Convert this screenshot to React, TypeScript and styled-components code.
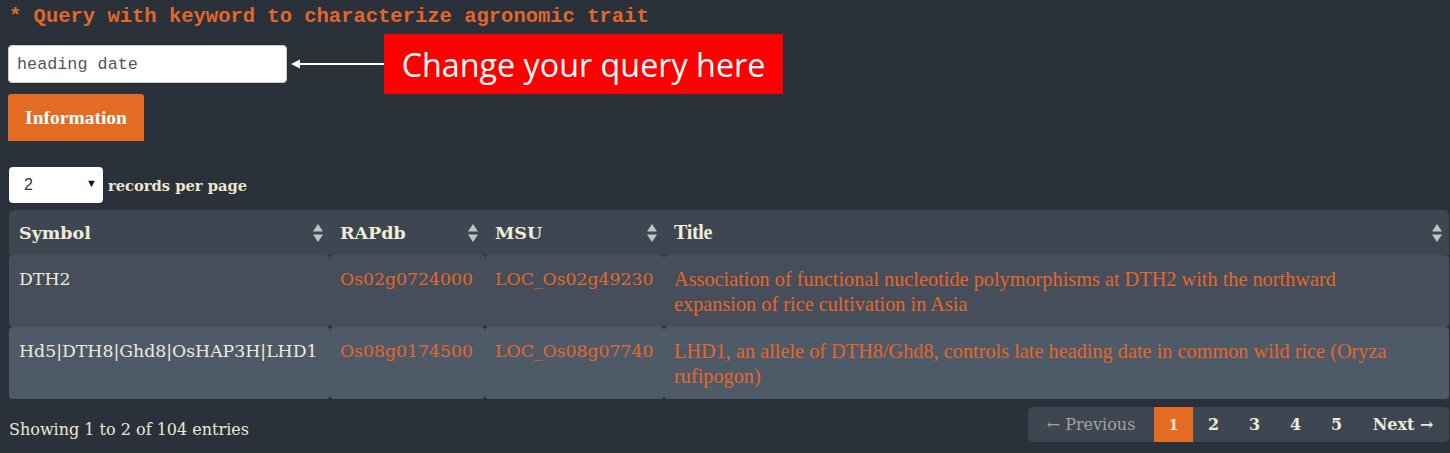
import React from "react";
import styled, { createGlobalStyle } from "styled-components";

const Global = createGlobalStyle`
  html, body { margin: 0; padding: 0; background: #2b313b; }
  body { width: 1450px; height: 453px; overflow: hidden; }
`;

const serif = `"DejaVu Serif", Georgia, serif`;
const narrowSerif = `"Liberation Serif", "Times New Roman", serif`;

const Page = styled.div`
  padding: 5px 1px 0 9px;
  display: flex;
  flex-direction: column;
`;

const Heading = styled.h4`
  margin: 0;
  font-family: "Liberation Mono", monospace;
  font-weight: bold;
  font-size: 20.5px;
  line-height: 24px;
  color: #e2672a;
`;

const QueryRow = styled.div`
  display: flex;
  align-items: center;
  margin-top: 5px;
  height: 60px;
  margin-left: -1px;
`;

const QueryInput = styled.input`
  box-sizing: border-box;
  width: 279px;
  height: 38px;
  border: 1px solid #ccc;
  border-radius: 4px;
  padding: 0 8px;
  font-family: "Liberation Mono", monospace;
  font-size: 16.8px;
  color: #555;
  background: #fff;
  outline: none;
`;

const Arrow = styled.svg`
  display: block;
  margin-left: 4px;
`;

const Callout = styled.div`
  background: #ff0000;
  color: #fff;
  font-family: "Open Sans", sans-serif;
  font-size: 32.3px;
  height: 60px;
  width: 399px;
  display: flex;
  align-items: center;
  justify-content: center;
  box-sizing: border-box;
`;

const InfoButton = styled.button`
  align-self: flex-start;
  margin-left: -1px;
  width: 136px;
  height: 47px;
  border: none;
  border-radius: 3px 3px 0 0;
  background: #e46b24;
  color: #fff;
  font-family: ${narrowSerif};
  font-weight: bold;
  font-size: 19.5px;
  padding: 0;
`;

const LengthRow = styled.div`
  display: flex;
  align-items: center;
  margin-top: 26px;
  gap: 5px;
`;

const Select = styled.div`
  box-sizing: border-box;
  width: 94px;
  height: 36px;
  background: #fff;
  border-radius: 4px;
  display: flex;
  align-items: center;
  justify-content: space-between;
  padding: 0 6px 0 15px;
  font-family: "Liberation Sans", sans-serif;
  font-size: 16px;
  color: #333;
`;

const Caret = styled.span`
  font-size: 11px;
  color: #111;
  margin-top: -4px;
`;

const Label = styled.span`
  font-family: ${serif};
  font-size: 14.7px;
  font-weight: bold;
  color: #ebe6cf;
`;

const Table = styled.table`
  margin-top: 7px;
  width: 1440px;
  border-collapse: separate;
  border-spacing: 0;
  table-layout: fixed;
`;

const Th = styled.th<{ $w?: number }>`
  ${(p) => (p.$w ? `width: ${p.$w}px;` : "")}
  background: #3e4652;
  height: 45px;
  padding: 0 10px;
  text-align: left;
  font-family: ${serif};
  font-size: 17.5px;
  font-weight: bold;
  color: #f1ecd6;
  position: relative;
  &:first-child { border-top-left-radius: 5px; }
  &:last-child { border-top-right-radius: 5px; }
`;

const TitleTh = styled(Th)`
  font-family: ${narrowSerif};
  font-size: 20px;
  letter-spacing: -0.3px;
`;

const SortIcon = styled.svg`
  position: absolute;
  right: 7px;
  top: 13px;
`;

const Tr = styled.tr<{ $alt?: boolean }>`
  td { background: ${(p) => (p.$alt ? "#4f5a68" : "#454e5a")}; }
`;

const Td = styled.td`
  height: 72px;
  padding: 12px 10px 0;
  box-sizing: border-box;
  vertical-align: top;
  border-radius: 4px;
  font-family: ${serif};
  font-size: 17.3px;
  color: #eeeade;
  line-height: 25px;
`;

const LinkTd = styled(Td)`
  color: #e4672b;
`;

const TitleTd = styled(Td)`
  color: #e4672b;
  font-family: ${narrowSerif};
  font-size: 20.3px;
  padding-right: 60px;
`;

const Footer = styled.div`
  display: flex;
  align-items: center;
  justify-content: space-between;
  margin-top: 8px;
`;

const Info = styled.span`
  font-family: ${serif};
  font-size: 16px;
  color: #ebe7d6;
  margin-top: 10px;
`;

const Pager = styled.div`
  display: flex;
  align-items: stretch;
  height: 35px;
  background: #3e4652;
  border-radius: 5px;
  overflow: hidden;
`;

const PageItem = styled.span<{ $active?: boolean; $disabled?: boolean; $w: number }>`
  width: ${(p) => p.$w}px;
  display: flex;
  align-items: center;
  justify-content: center;
  font-family: ${serif};
  font-size: ${(p) => (p.$active ? 14 : 16)}px;
  font-weight: ${(p) => (p.$disabled ? "normal" : "bold")};
  color: ${(p) => (p.$disabled ? "#a3a39b" : "#efebd9")};
  background: ${(p) => (p.$active ? "#e46b24" : "transparent")};
`;

const Sort = () => (
  <SortIcon width="10" height="20" viewBox="0 0 10 20">
    <path d="M5 1 L10 8.5 L0 8.5 Z" fill="#bfc3c7" />
    <path d="M5 19 L10 11.5 L0 11.5 Z" fill="#bfc3c7" />
  </SortIcon>
);

const rows = [
  {
    symbol: "DTH2",
    rap: "Os02g0724000",
    msu: "LOC_Os02g49230",
    title:
      "Association of functional nucleotide polymorphisms at DTH2 with the northward expansion of rice cultivation in Asia",
  },
  {
    symbol: "Hd5|DTH8|Ghd8|OsHAP3H|LHD1",
    rap: "Os08g0174500",
    msu: "LOC_Os08g07740",
    title:
      "LHD1, an allele of DTH8/Ghd8, controls late heading date in common wild rice (Oryza rufipogon)",
  },
];

export default function App() {
  return (
    <>
      <Global />
      <Page>
        <Heading>* Query with keyword to characterize agronomic trait</Heading>
        <QueryRow>
          <QueryInput defaultValue="heading date" />
          <Arrow width="93" height="12" viewBox="0 0 93 12">
            <path d="M0 6 L9 1.5 L9 10.5 Z" fill="#fff" />
            <rect x="8" y="5" width="85" height="2" fill="#fff" />
          </Arrow>
          <Callout>Change your query here</Callout>
        </QueryRow>
        <InfoButton>Information</InfoButton>
        <LengthRow>
          <Select>
            <span>2</span>
            <Caret>▼</Caret>
          </Select>
          <Label>records per page</Label>
        </LengthRow>
        <Table>
          <thead>
            <tr>
              <Th $w={301}>Symbol<Sort /></Th>
              <Th $w={135}>RAPdb<Sort /></Th>
              <Th $w={159}>MSU<Sort /></Th>
              <TitleTh>Title<Sort /></TitleTh>
            </tr>
          </thead>
          <tbody>
            {rows.map((r, i) => (
              <Tr key={r.rap} $alt={i % 2 === 1}>
                <Td>{r.symbol}</Td>
                <LinkTd>{r.rap}</LinkTd>
                <LinkTd>{r.msu}</LinkTd>
                <TitleTd>{r.title}</TitleTd>
              </Tr>
            ))}
          </tbody>
        </Table>
        <Footer>
          <Info>Showing 1 to 2 of 104 entries</Info>
          <Pager>
            <PageItem $w={126} $disabled>← Previous</PageItem>
            <PageItem $w={39} $active>1</PageItem>
            <PageItem $w={41}>2</PageItem>
            <PageItem $w={41}>3</PageItem>
            <PageItem $w={41}>4</PageItem>
            <PageItem $w={41}>5</PageItem>
            <PageItem $w={92}>Next →</PageItem>
          </Pager>
        </Footer>
      </Page>
    </>
  );
}
